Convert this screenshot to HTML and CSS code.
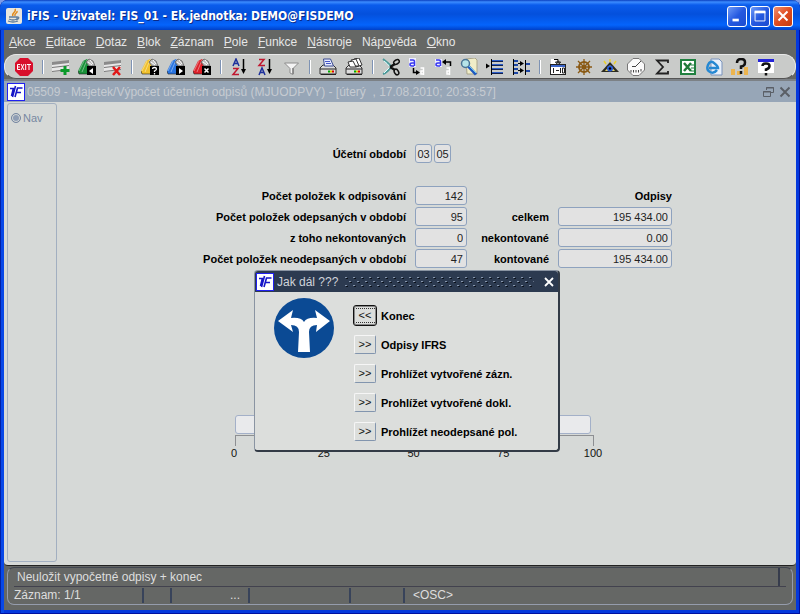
FILE: index.html
```
<!DOCTYPE html>
<html lang="cs">

<head>
    <meta charset="UTF-8">
    <meta name="viewport" content="width=device-width, initial-scale=1.0">
    <title>iFIS</title>
    <link rel="stylesheet" href="styles.css">
</head>

<body>
    <!-- shared shapes -->
    <svg class="defs">
        <symbol id="logo" viewBox="0 0 18 18">
            <rect x=".5" y=".5" width="17" height="17" fill="#fff" stroke="#2020f0" />
            <path d="M3 5.500h4M6.500 5L4.500 13M8.500 3L5.500 14M15.500 5H10.500L8 14M9.500 9.500h4.500" fill="none" stroke="#1414c8" stroke-width="1.600" />
        </symbol>
        <symbol id="table" viewBox="0 0 18 18">
            <path d="M0 5l17-3v10L0 14z" fill="#e8e8e8" />
            <path d="M0 4l17-2v3L0 7z" fill="#8a8a8a" />
            <path d="M0 9l17-2v1L0 10zM0 13l17-2v1L0 14z" fill="#777" />
        </symbol>
        <symbol id="book" viewBox="0 0 18 18">
            <path d="M5 3l4-2 3 4-1 11H1l-1-3z" fill="currentColor" />
            <path d="M6 3L1 13M9 2L4 14" stroke="#fff" stroke-opacity=".4" />
            <path d="M0 13l1 3h8" fill="none" stroke="#222" stroke-opacity=".6" />
            <path d="M8 4l3-3 4 2 2 5-6 0z" fill="#b8b8b8" stroke="#555" stroke-width=".7" />
            <path d="M10 4l4 3M12 2l3 4" stroke="#fff" />
            <rect x="9" y="8" width="9" height="9" fill="#000" />
        </symbol>
        <symbol id="printer" viewBox="0 0 18 18">
            <path d="M1 10l3-3h10l3 3v6H1z" fill="#ddd" stroke="#333" />
            <path d="M1 11h16M2 16.500h15" stroke="#222" />
            <path d="M9 13.500h2" stroke="#0a0" stroke-width="2" />
            <path d="M11 13.500h2" stroke="#dc0" stroke-width="2" />
            <path d="M13 13.500h2" stroke="#d00" stroke-width="2" />
        </symbol>
    </svg>

    <div class="window">
        <!-- title bar -->
        <header class="titlebar">
            <svg class="java" viewBox="0 0 16 16">
                <rect width="16" height="16" rx="2" fill="#e8e6de" />
                <path d="M9 1C11 4 5 5 7 8M11 3C12 5 8 5 9 8" fill="none" stroke="#e08a1c" stroke-width="1.500" />
                <path d="M3 9h8v2q-4 2-8 0M11 9q3 0 1 2l-2 1M2 13q5 2 10 0" fill="none" stroke="#5d7c9c" stroke-width="1.300" />
            </svg>
            <h1>iFIS - Uživatel: FIS_01 - Ek.jednotka: DEMO@FISDEMO</h1>
            <button class="win-btn" aria-label="Minimalizovat"><svg viewBox="0 0 20 20"><path d="M5 14.500h7" stroke="#fff" stroke-width="3" /></svg></button>
            <button class="win-btn" aria-label="Maximalizovat"><svg viewBox="0 0 20 20"><path d="M4 5.500h12" stroke="#fff" stroke-width="3" /><path d="M4.500 5v10.500h11V5" fill="none" stroke="#fff" /></svg></button>
            <button class="win-btn close" aria-label="Zavřít"><svg viewBox="0 0 20 20"><path d="M5 5l10 10M15 5L5 15" stroke="#fff" stroke-width="2.200" /></svg></button>
        </header>

        <!-- menu -->
        <nav class="menu">
            <button><u>A</u>kce</button>
            <button><u>E</u>ditace</button>
            <button><u>D</u>otaz</button>
            <button><u>B</u>lok</button>
            <button><u>Z</u>áznam</button>
            <button><u>P</u>ole</button>
            <button><u>F</u>unkce</button>
            <button><u>N</u>ástroje</button>
            <button>Náp<u>o</u>věda</button>
            <button><u>O</u>kno</button>
        </nav>

        <!-- toolbar -->
        <div class="toolbar">
            <button aria-label="Konec"><svg viewBox="0 0 18 18">
                <path d="M5 0h8l5 5v8l-5 5H5l-5-5V5z" fill="#d80f2c" />
                <path d="M5 6.500H2.500v5H5M2.500 9H5M6 6l3 6M9 6l-3 6M10.700 6v6M12 6.500h4M14 6.500V12" fill="none" stroke="#fff" /></svg></button>
            <i></i>
            <button aria-label="Vložit"><svg viewBox="0 0 18 18"><use href="#table" /><path d="M13 8v9M8.500 12.500h9" stroke="#0a9a2a" stroke-width="3" /></svg></button>
            <button aria-label="Kopie"><svg viewBox="0 0 18 18" class="green"><use href="#book" /><path d="M15 10v6l-4-3z" fill="#fff" /></svg></button>
            <button aria-label="Smazat"><svg viewBox="0 0 18 18"><use href="#table" /><path d="M9 9l7 8M16 9l-7 8" stroke="#e01818" stroke-width="2.500" /></svg></button>
            <i></i>
            <button aria-label="Zadat dotaz"><svg viewBox="0 0 18 18" class="yellow"><use href="#book" /><path d="M11.500 11q0-1.500 2-1.500t2 1.500q0 1-2 2v1M13.500 15v1.500" fill="none" stroke="#fff" stroke-width="1.300" /></svg></button>
            <button aria-label="Provést dotaz"><svg viewBox="0 0 18 18" class="blue"><use href="#book" /><path d="M12 10v6l4-3z" fill="#fff" /></svg></button>
            <button aria-label="Zrušit dotaz"><svg viewBox="0 0 18 18" class="red"><use href="#book" /><path d="M11.500 10.500l4 4M15.500 10.500l-4 4" stroke="#fff" stroke-width="1.500" /></svg></button>
            <i></i>
            <button aria-label="Řadit vzestupně"><svg viewBox="0 0 18 18">
                <path d="M3 8l3-7 3 7M4 5.500h4" fill="none" stroke="#1c2f9c" stroke-width="1.500" />
                <path d="M3 10.500h5L3 16.500h6" fill="none" stroke="#c01830" stroke-width="1.500" />
                <path d="M13.500 1v12" stroke="#000" stroke-width="1.500" /><path d="M11 11h5l-2.500 5z" /></svg></button>
            <button aria-label="Řadit sestupně"><svg viewBox="0 0 18 18">
                <path d="M3 1.500h5L3 7.500h6" fill="none" stroke="#c01830" stroke-width="1.500" />
                <path d="M3 17l3-7 3 7M4 14.500h4" fill="none" stroke="#1c2f9c" stroke-width="1.500" />
                <path d="M13.500 1v12" stroke="#000" stroke-width="1.500" /><path d="M11 11h5l-2.500 5z" /></svg></button>
            <button aria-label="Filtr"><svg viewBox="0 0 18 18"><path d="M2.500 5h14L11 10.500v6l-3-1.500v-4.500z" fill="#f4f4f4" stroke="#8c8c8c" /><path d="M11 10v6" stroke="#666" /></svg></button>
            <i></i>
            <button aria-label="Tisk"><svg viewBox="0 0 18 18"><use href="#printer" /><path d="M4.500 1h7l3 7h-9z" fill="#e6ebff" stroke="#3a4b90" /><path d="M6 3.500h5M7 5.500h5" stroke="#4658c8" /></svg></button>
            <button aria-label="Tisk sestavy"><svg viewBox="0 0 18 18"><use href="#printer" /><path d="M9 1l5-1 3 7-6 2z" fill="#fff" stroke="#333" /><path d="M6 2l5-1 3 7H8z" fill="#fff" stroke="#333" /><path d="M3 4l5-1 3 6H5z" fill="#fff" stroke="#333" /></svg></button>
            <i></i>
            <button aria-label="Vyjmout"><svg viewBox="0 0 18 18">
                <path d="M1 1q4 3 9 8M1 16q4-1 9-8" fill="none" stroke="#4c9898" stroke-width="2" />
                <path d="M2 3q3 2 6 6l-6 6" fill="none" stroke="#dff" />
                <path d="M8 9l5-3M8 9l5 3" stroke="#111" stroke-width="2.500" />
                <ellipse cx="14.500" cy="4" rx="3" ry="2" transform="rotate(-30 14.500 4)" fill="none" stroke="#111" stroke-width="1.500" />
                <ellipse cx="14.500" cy="14" rx="2" ry="3" transform="rotate(-30 14.500 14)" fill="none" stroke="#111" stroke-width="1.500" /></svg></button>
            <button aria-label="Kopírovat"><svg viewBox="0 0 18 18"><rect x="1" width="7" height="9" fill="#eef" />
                <path d="M2 2h3q1.500 0 1.500 2v4M6 5H4Q2 5 2 6.500T4 8h2" fill="none" stroke="#3838f0" stroke-width="1.500" />
                <path d="M5.500 10v4.500H9" fill="none" stroke="#000" stroke-width="1.500" /><path d="M8 12l4 2.500L8 17z" />
                <path d="M12.500 10h3v7M15 13h-2v3h2" fill="none" stroke="#fff" stroke-width="1.500" /></svg></button>
            <button aria-label="Vložit text"><svg viewBox="0 0 18 18"><rect x="1" y="1" width="7" height="8" fill="#eef" />
                <path d="M2 2h3q1.500 0 1.500 2v4M6 5H4Q2 5 2 6.500T4 8h2" fill="none" stroke="#3838f0" stroke-width="1.500" />
                <path d="M16.500 8V4H11" fill="none" stroke="#000" stroke-width="1.500" /><path d="M12 1L8 4l4 3z" />
                <path d="M12.500 10h3v7M15 13h-2v3h2" fill="none" stroke="#fff" stroke-width="1.500" /></svg></button>
            <button aria-label="Hledat"><svg viewBox="0 0 18 18"><path d="M6 1l9-1 2 2v14H7z" fill="#f0edc8" stroke="#aaa58a" /><circle cx="5.500" cy="5.500" r="4" fill="#b6e4e8" stroke="#4a7494" stroke-width="1.500" /><path d="M8.500 8.500l7.500 8" stroke="#2058c0" stroke-width="3" /><path d="M9 8l7 7" stroke="#6ac8f0" /></svg></button>
            <button aria-label="Seznam hodnot"><svg viewBox="0 0 18 18"><path d="M0 5.500v5l4-2.500z" /><path d="M5.500 1v16" stroke="#000" /><path d="M6 3h11M6 7h11M6 11h11M6 15h11" stroke="#14224e" stroke-width="2" /><path d="M6 2.500h11M6 6.500h11M6 10.500h11M6 14.500h11" stroke="#2c5ec8" /></svg></button>
            <button aria-label="Detail"><svg viewBox="0 0 18 18"><path d="M1.500 1v16M13.500 2v15" stroke="#000" /><path d="M2 3h4M2 7h4M2 11h4M2 15h4M14 6h4M14 13h4" stroke="#1d46a4" stroke-width="2" /><path d="M6 5.500h5M6 12.500h5" stroke="#000" /><path d="M8 3v5l4-2.500zM8 10v5l4-2.500z" /></svg></button>
            <i></i>
            <button aria-label="Kalkulace"><svg viewBox="0 0 18 18"><path d="M2 1h6v5H2z" fill="#fff" /><path d="M5 1.500h4V5M6.500 4h5L9 7z" stroke="#000" fill="none" /><rect x="1.500" y="6.500" width="15" height="10" fill="#fff" stroke="#222" /><path d="M2 8h14" stroke="#3a64c8" stroke-width="2" /><path d="M4.500 10v5M7 12.500h3M11.500 10v5M13.500 10v5h2v-5z" stroke="#222" fill="none" /></svg></button>
            <button aria-label="Navigátor"><svg viewBox="0 0 18 18"><g fill="none" stroke="#8a5a14"><circle cx="9" cy="9" r="5" stroke-width="2" /><circle cx="9" cy="9" r="1.500" stroke-width="1.500" /><path d="M9 1v16M1 9h16M3 3l12 12M15 3L3 15" stroke-width="1.300" /></g></svg></button>
            <button aria-label="Náhled"><svg viewBox="0 0 18 18"><path d="M9 1v3M3 3l2 3M15 3l-2 3" stroke="#ecd22c" stroke-width="1.500" /><path d="M0 14L9 4l9 10z" fill="#2b2b22" /><path d="M4 13l5-6 5 6z" fill="#e5d463" /><circle cx="9" cy="10.500" r="3" fill="#2458d8" /><circle cx="9" cy="10.500" r="1.200" /></svg></button>
            <button aria-label="Čas"><svg viewBox="0 0 18 18"><path d="M6 .5h6l5.500 5.500v6L12 17.500H6L.5 12V6z" fill="#fafafa" stroke="#777" /><path d="M9 8l5-5M5 8.500h4M4 12v2.500M6.500 12v2.500M9 12v2.500M11.500 12v2.500M14 11v2.500" stroke="#444" /></svg></button>
            <button aria-label="Součet"><svg viewBox="0 0 18 18"><path d="M15 5V2.500H4L10 9l-6 6.500h11V13" fill="none" stroke="#222" stroke-width="1.800" /></svg></button>
            <button aria-label="Excel"><svg viewBox="0 0 18 18"><rect x="2" y="2" width="14" height="14" fill="#fff" stroke="#208040" stroke-width="2" /><path d="M5 5l7 8M12 5l-7 8" stroke="#207a3a" stroke-width="2.500" /><path d="M12 7h3M12 10h3M12 13h3" stroke="#208040" /></svg></button>
            <button aria-label="Internet"><svg viewBox="0 0 18 18"><path d="M6 1h8l3 3v13H6z" fill="#e8f0fa" stroke="#7a93bc" /><path d="M12 12q-3 4-7 2T3 7t6-2 4 5H4" fill="none" stroke="#2588d2" stroke-width="2.500" /></svg></button>
            <button aria-label="Nápověda k poli"><svg viewBox="0 0 18 18"><path d="M0 11h4v6H0zM6 13h4v4H6zM13 9h4v8h-4z" fill="#ecb44e" /><path d="M6 5q0-4 4-4t4 3.500-4 4V11M10 13v3" fill="none" stroke="#111" stroke-width="2.500" /></svg></button>
            <button aria-label="Nápověda"><svg viewBox="0 0 18 18"><rect x="1" y="1" width="16" height="14" fill="#fff" /><path d="M1 2.500h16" stroke="#2424d8" stroke-width="3" /><path d="M5.500 8q0-2.500 3.500-2.500t3.500 2.500-3.500 3.500V13M9 15v2.500" fill="none" stroke="#111" stroke-width="2.500" /></svg></button>
        </div>

        <!-- document -->
        <div class="docbar">
            <svg class="logo"><use href="#logo" /></svg>
            <h2>05509 - Majetek/Výpočet účetních odpisů (MJUODPVY) - [úterý&nbsp; , 17.08.2010; 20:33:57]</h2>
            <button aria-label="Obnovit"><svg viewBox="0 0 12 12"><path d="M3.500 4V1.500h7v5H8M3 2h8M.5 5.500h7v5h-7zM0 6h8" fill="none" stroke="#5a5f66" /></svg></button>
            <button aria-label="Zavřít okno"><svg viewBox="0 0 12 12"><path d="M1.500 1.500l9 9M10.500 1.500l-9 9" stroke="#5a5f66" stroke-width="2" /></svg></button>
        </div>

        <main>
            <aside>
                <label><input type="radio" name="nav">Nav</label>
            </aside>

            <form class="form">
                <div class="period">
                    <label for="month">Účetní období</label>
                    <input id="month" value="03" readonly>
                    <input id="year" aria-label="Rok" value="05" readonly>
                </div>

                <div class="counts">
                    <label for="c1">Počet položek k odpisování</label>
                    <input id="c1" value="142" readonly>
                    <span class="head">Odpisy</span>

                    <label for="c2">Počet položek odepsaných v období</label>
                    <input id="c2" value="95" readonly>
                    <label for="a2">celkem</label>
                    <input id="a2" value="195 434.00" readonly>

                    <label for="c3">z toho nekontovaných</label>
                    <input id="c3" value="0" readonly>
                    <label for="a3">nekontované</label>
                    <input id="a3" value="0.00" readonly>

                    <label for="c4">Počet položek neodepsaných v období</label>
                    <input id="c4" value="47" readonly>
                    <label for="a4">kontované</label>
                    <input id="a4" value="195 434.00" readonly>
                </div>

                <div class="progress">
                    <div class="track"></div>
                    <div class="ruler"></div>
                    <div class="ticks">
                        <span>0</span><span>25</span><span>50</span><span>75</span><span>100</span>
                    </div>
                </div>
            </form>

            <!-- dialog -->
            <section class="dialog" role="dialog" aria-labelledby="dlg-title">
                <div class="dialog-title">
                    <svg class="logo"><use href="#logo" /></svg>
                    <h3 id="dlg-title">Jak dál ???</h3>
                    <svg class="grip" aria-hidden="true">
                        <pattern id="dots" width="8" height="8" patternUnits="userSpaceOnUse">
                            <path d="M0 1h2v1H0zM4 5h2v1H4z" fill="#8796ac" />
                            <path d="M1 2h2v1H1zM5 6h2v1H5z" fill="#0c121c" />
                        </pattern>
                        <rect width="100%" height="100%" fill="url(#dots)" />
                    </svg>
                    <button aria-label="Zavřít dialog"><svg viewBox="0 0 12 12"><path d="M2 2l8 8M10 2l-8 8" stroke="#fff" stroke-width="1.800" /></svg></button>
                </div>
                <div class="dialog-body">
                    <svg class="sign" viewBox="0 0 60 60">
                        <circle cx="30" cy="30" r="30" fill="#0b4a94" />
                        <path d="M4 23L19 12L17 20Q27 19 30 24Q33 19 43 20L41 12L56 23L42 34L43 27Q35 27 35 34L36 54H24L25 34Q25 27 17 27L19 34Z" fill="#fff" />
                    </svg>
                    <div class="choices">
                        <button id="b1" class="focused">&lt;&lt;</button><label for="b1">Konec</label>
                        <button id="b2">&gt;&gt;</button><label for="b2">Odpisy IFRS</label>
                        <button id="b3">&gt;&gt;</button><label for="b3">Prohlížet vytvořené zázn.</label>
                        <button id="b4">&gt;&gt;</button><label for="b4">Prohlížet vytvořené dokl.</label>
                        <button id="b5">&gt;&gt;</button><label for="b5">Prohlížet neodepsané pol.</label>
                    </div>
                </div>
            </section>
        </main>

        <!-- status bar -->
        <footer>
            <div class="message"><span>Neuložit vypočetné odpisy + konec</span></div>
            <div class="cells">
                <span class="record">Záznam: 1/1</span>
                <span class="short"></span>
                <span class="dots">...</span>
                <span class="wide"></span>
                <span class="middle"></span>
                <span class="osc">&lt;OSC&gt;</span>
            </div>
        </footer>
    </div>
</body>

</html>
```
FILE: styles.css
```
* {
    box-sizing: border-box;
}

body {
    margin: 0;
    background: #7c9be8;
    font: 12px/14px "Liberation Sans", Arial, sans-serif;
    color: #111;
}

h1,
h2,
h3 {
    margin: 0;
    font-size: 12px;
    font-weight: normal;
}

button {
    padding: 0;
    border: 0;
    background: none;
    font: inherit;
    color: inherit;
}

svg {
    display: block;
}

.defs {
    position: absolute;
    width: 0;
    height: 0;
}

.window {
    display: flex;
    flex-direction: column;
    min-height: 100vh;
    padding: 0 4px 4px;
    border-radius: 8px 8px 0 0;
    background: #656765;
    box-shadow: inset 1px 0 #0020a8, inset -1px -1px #0010a0, inset 4px 0 #0848e8, inset -4px -4px #0438dc;
}

/* title bar */
.titlebar {
    display: flex;
    align-items: center;
    gap: 3px;
    height: 30px;
    margin: 0 -4px;
    padding: 2px 7px 0 6px;
    border-radius: 8px 8px 0 0;
    background: linear-gradient(#0a3fc0, #3c8cff 2px, #0a5cec 5px, #0450dc 14px, #0464fc 25px, #0040c8);
    color: #fff;
}

.titlebar h1 {
    flex: 1;
    padding-left: 2px;
    font: bold 12px/16px "DejaVu Sans Condensed", "DejaVu Sans", sans-serif;
    text-shadow: 1px 1px #0a2a88;
}

.java {
    width: 16px;
    height: 16px;
}

.win-btn {
    width: 20px;
    height: 21px;
    border: 1px solid #fff;
    border-radius: 3px;
    background: linear-gradient(135deg, #6f9bf8, #2458e0 50%, #1c4cd0);
}

.win-btn.close {
    background: linear-gradient(135deg, #f09070, #e04c20 50%, #c43c10);
}

/* menu */
.menu {
    display: flex;
    gap: 10px;
    height: 24px;
    padding: 0 5px;
    color: #e6e6e6;
}

/* toolbar */
.toolbar {
    display: flex;
    align-items: center;
    height: 25px;
    padding-left: 6px;
    border: 1px solid #e8e8e8;
    border-bottom-color: #555;
    border-radius: 12px;
    background: #c9cbc9;
}

.toolbar button {
    display: flex;
    justify-content: center;
    width: 26px;
}

.toolbar svg {
    width: 18px;
    height: 18px;
}

.toolbar i {
    width: 11px;
    height: 14px;
    background: linear-gradient(90deg, #7e93b4 50%, #fff 50%) center / 2px 100% no-repeat;
}

.green {
    color: #189038;
}

.yellow {
    color: #f0c02c;
}

.blue {
    color: #2874e0;
}

.red {
    color: #dc2028;
}

/* document bar */
.docbar {
    display: flex;
    align-items: center;
    gap: 4px;
    height: 23px;
    padding: 0 5px 0 3px;
    border-top: 2px solid #7c8186;
    background: #97a6b7;
    color: #c6cbd1;
}

.docbar h2 {
    flex: 1;
    margin-left: -2px;
}

.docbar button svg,
.dialog-title button svg {
    width: 12px;
    height: 12px;
}

.logo {
    flex: none;
    width: 18px;
    height: 18px;
}

/* canvas */
main {
    position: relative;
    display: flex;
    flex: 1;
    background: #d6d9d7;
    border-bottom: 1px solid #222;
    border-radius: 0 0 4px 4px;
}

aside {
    width: 50px;
    margin: 1px 3px 3px;
    padding: 7px 3px;
    border: 1px solid #a2afc0;
    border-radius: 3px;
    font-size: 11px;
    color: #7788a2;
}

aside label {
    display: flex;
    align-items: center;
    gap: 2px;
}

aside input {
    appearance: none;
    width: 10px;
    height: 10px;
    margin: 0;
    border: 1px solid #7788a2;
    border-radius: 50%;
    background: #8e9db4;
    box-shadow: inset 0 0 0 1px #d6d9d7;
}

.form {
    flex: 1;
    padding: 42px 0 0 132px;
    font-size: 11px;
}

.form label,
.head,
.choices label {
    font-weight: bold;
    color: #000;
}

.form input {
    width: 100%;
    min-width: 0;
    height: 19px;
    padding: 0 3px;
    border: 1px solid #8ea2be;
    border-radius: 3px;
    background: #e2e2e2;
    font: inherit;
    color: #222;
    text-align: right;
}

.period {
    display: grid;
    grid-template-columns: 221px 17px 17px;
    align-items: center;
    column-gap: 2px;
}

.period label {
    padding-right: 7px;
    text-align: right;
}

.period input {
    padding: 0;
    text-align: center;
}

.counts {
    display: grid;
    grid-template-columns: 214px 52px 73px 114px;
    grid-auto-rows: 19px;
    align-items: center;
    column-gap: 9px;
    row-gap: 2px;
    margin-top: 23px;
    text-align: right;
}

.head {
    grid-column: 4;
}

.progress {
    width: 359px;
    margin: 147px 0 0 43px;
}

.track {
    height: 19px;
    margin-right: 3px;
    border: 1px solid #a3b0c8;
    border-radius: 3px;
    background: #e9eaec;
}

.ruler {
    height: 11px;
    margin-top: 1px;
    border: 1px solid #8d8f92;
    border-bottom: 0;
}

.ticks {
    display: flex;
    justify-content: space-between;
    margin: 0 -9px 0 -11px;
}

.ticks span {
    width: 20px;
    text-align: center;
}

/* dialog */
.dialog {
    position: absolute;
    top: 168px;
    left: 250px;
    width: 306px;
    border: 1px solid #8a94a2;
    border-right: 2px solid #333b46;
    border-bottom: 2px solid #333b46;
    border-radius: 4px;
    background: #dcdedc;
}

.dialog-title {
    display: flex;
    align-items: center;
    gap: 3px;
    height: 21px;
    padding: 0 3px 0 1px;
    border-radius: 3px 3px 0 0;
    background: #2c3a50;
    color: #d0d4da;
}

.dialog-title h3 {
    margin-right: 4px;
}

.grip {
    flex: 1;
    width: 0;
    height: 12px;
    margin-right: 6px;
}

.dialog-body {
    display: flex;
    align-items: flex-start;
    gap: 20px;
    padding: 6px 19px 9px;
}

.sign {
    width: 60px;
    height: 60px;
}

.choices {
    display: grid;
    grid-template-columns: 22px auto;
    align-items: center;
    gap: 10px 5px;
    padding-top: 8px;
    font-size: 11px;
}

.choices button {
    height: 19px;
    border: 1px solid #f6f6f6;
    border-right-color: #8295ae;
    border-bottom-color: #8295ae;
    border-radius: 2px;
    background: #dcdedc;
    line-height: 13px;
}

.choices .focused {
    border-color: #888;
    outline: 1px solid #111;
    background: linear-gradient(90deg, #333 50%, #0000 50%) 3px 1px / 2px 1px repeat-x, linear-gradient(90deg, #333 50%, #0000 50%) 3px 15px / 2px 1px repeat-x, #dcdedc;
}

/* status bar */
footer {
    margin: 1px 3px 5px;
    height: 38px;
    border: 1px solid #959cac;
    border-top-color: #414650;
    border-radius: 7px;
    color: #dedede;
}

.message {
    height: 19px;
    margin: 0 6px;
    padding-right: 6px;
    border-bottom: 1px solid #42424e;
}

.message span {
    display: block;
    padding: 2px 3px;
    border-right: 2px solid #363c4c;
    line-height: 14px;
}

.cells {
    display: flex;
    padding-left: 6px;
}

.cells span {
    height: 15px;
    margin-top: 1px;
    border-right: 2px solid #38435a;
}

.cells .record {
    width: 130px;
}

.cells .short {
    width: 28px;
}

.cells .dots {
    width: 78px;
    padding-right: 8px;
    text-align: right;
}

.cells .wide {
    width: 101px;
}

.cells .middle {
    width: 54px;
}

.cells .osc {
    padding-left: 8px;
    border: 0;
}
```
